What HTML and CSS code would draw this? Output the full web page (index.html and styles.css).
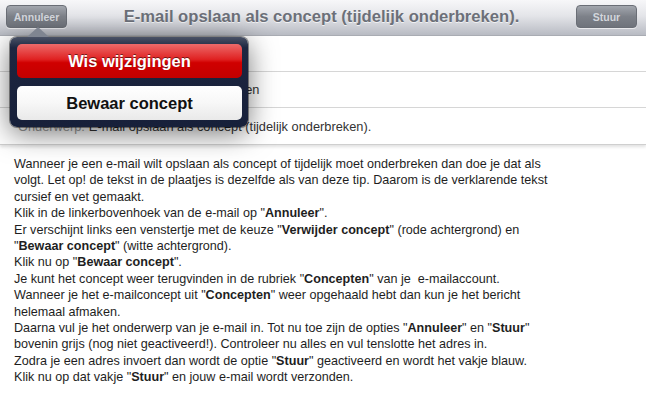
FILE: index.html
```html
<!DOCTYPE html>
<html lang="nl">
<head>
  <meta charset="UTF-8">
  <title>E-mail opslaan als concept</title>
  <link rel="stylesheet" href="styles.css">
</head>
<body>
  <div class="compose">
    <div class="topbar">
      <button class="navbtn">Annuleer</button>
      <h1>E-mail opslaan als concept (tijdelijk onderbreken).</h1>
      <button class="navbtn">Stuur</button>
    </div>
    <div class="row"><span class="lbl">Aan:</span></div>
    <div class="row"><span class="lbl">Kopie/Bcc, Van:</span> Marianne van den Bergen</div>
    <div class="row"><span class="lbl">Onderwerp:</span> E-mail opslaan als concept (tijdelijk onderbreken).</div>

    <div class="popover">
      <div class="arrow"></div>
      <button class="pop-btn red">Wis wijzigingen</button>
      <button class="pop-btn white">Bewaar concept</button>
    </div>
  </div>

  <p class="tip">
    Wanneer je een e-mail wilt opslaan als concept of tijdelijk moet onderbreken dan doe je dat als<br>
    volgt. Let op! de tekst in de plaatjes is dezelfde als van deze tip. Daarom is de verklarende tekst<br>
    cursief en vet gemaakt.<br>
    Klik in de linkerbovenhoek van de e-mail op "<b>Annuleer</b>".<br>
    Er verschijnt links een venstertje met de keuze "<b>Verwijder concept</b>" (rode achtergrond) en<br>
    "<b>Bewaar concept</b>" (witte achtergrond).<br>
    Klik nu op "<b>Bewaar concept</b>".<br>
    Je kunt het concept weer terugvinden in de rubriek "<b>Concepten</b>" van je&nbsp; e-mailaccount.<br>
    Wanneer je het e-mailconcept uit "<b>Concepten</b>" weer opgehaald hebt dan kun je het bericht<br>
    helemaal afmaken.<br>
    Daarna vul je het onderwerp van je e-mail in. Tot nu toe zijn de opties "<b>Annuleer</b>" en "<b>Stuur</b>"<br>
    bovenin grijs (nog niet geactiveerd!). Controleer nu alles en vul tenslotte het adres in.<br>
    Zodra je een adres invoert dan wordt de optie "<b>Stuur</b>" geactiveerd en wordt het vakje blauw.<br>
    Klik nu op dat vakje "<b>Stuur</b>" en jouw e-mail wordt verzonden.
  </p>
</body>
</html>
```
FILE: styles.css
```css
* { margin:0; padding:0; box-sizing:border-box }
body {
  background:#fff; color:#1c1c1c;
  font-family:'Liberation Sans', Arial, sans-serif;
  width:646px; height:401px; overflow:hidden;
}

.compose {
  position:relative;
  height:145px;
  border-bottom:1px solid #cfcfcf;
  box-shadow:0 2px 3px rgba(0,0,0,0.12);
}
.topbar {
  height:36px;
  display:flex; align-items:flex-start; justify-content:space-between;
  padding:5px 9px 0 6px;
  background:linear-gradient(#f7f7f9, #e4e5e9 45%, #b8bbc3);
  border-bottom:1px solid #a9acb3;
}
.topbar h1 {
  font-size:16.6px; font-weight:700; color:#6c7079;
  margin-top:2px;
  text-shadow:0 1px 0 rgba(255,255,255,0.7);
}
.navbtn {
  width:61px; height:23px;
  border:1px solid #6a6e76; border-radius:4px;
  background:linear-gradient(#a3a7ae, #7d8189 50%, #6f737b);
  color:#d3d6dc; font-family:inherit; font-size:10.5px; font-weight:700;
  box-shadow:0 1px 0 rgba(255,255,255,0.6);
}

.row {
  height:36px;
  display:flex; align-items:center;
  padding-left:18px;
  border-bottom:1px solid #d6d6d6;
  font-size:12.8px; color:#333;
  gap:4px;
}
.row:nth-of-type(4) { border-bottom:none; }
.row .lbl { color:#9a9a9a; }

.popover {
  position:absolute; left:10px; top:37px;
  width:238px; height:90px;
  padding:7px 6px 7px 7px;
  display:flex; flex-direction:column; gap:8px;
  border-radius:7px;
  background:linear-gradient(#4a5266, #1d2640 12%, #17203a);
  box-shadow:0 6px 28px rgba(0,0,0,0.55), 0 0 0 1px rgba(0,0,0,0.4);
}
.arrow {
  position:absolute; left:17px; top:-10px;
  width:0; height:0;
  border-left:11px solid transparent;
  border-right:11px solid transparent;
  border-bottom:10px solid #7f8591;
}
.pop-btn {
  height:34px; border:none; border-radius:5px;
  font-family:inherit; font-size:16.5px; font-weight:700;
}
.pop-btn.red {
  background:linear-gradient(#ec6a6a, #e02222 45%, #d00000 55%, #c30000);
  color:#fff;
  text-shadow:0 -1px 0 rgba(0,0,0,0.5);
}
.pop-btn.white {
  background:linear-gradient(#fff, #f7f7f7 50%, #e9e9e9);
  color:#111;
}

.tip {
  padding:11px 0 0 14px;
  font-size:12.6px; line-height:16.4px;
  color:#1e1e1e;
}
```
